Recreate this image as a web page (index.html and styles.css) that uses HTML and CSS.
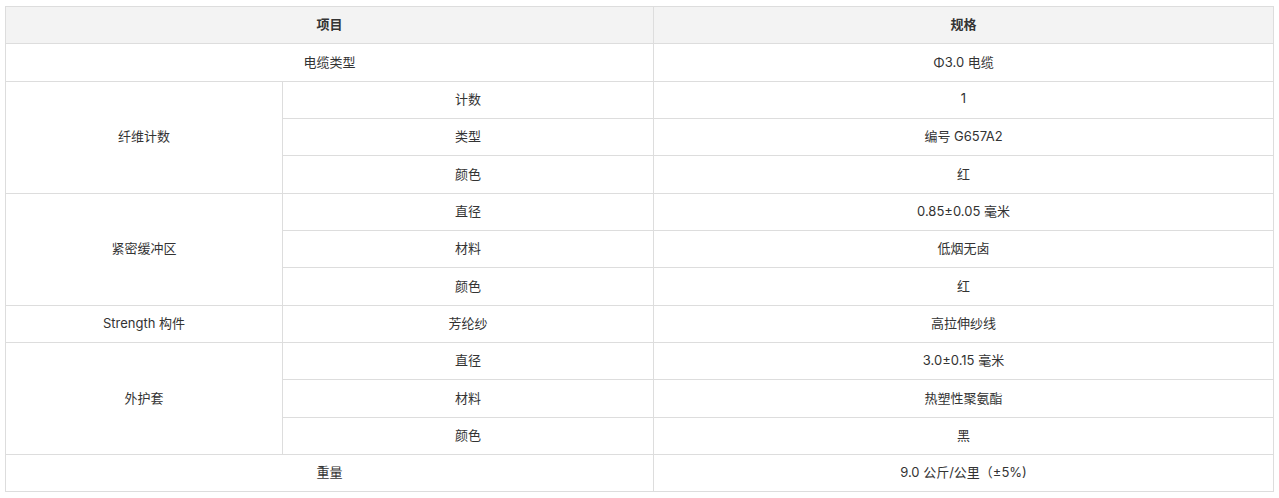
FILE: index.html
```html
<!DOCTYPE html>
<html lang="zh">
<head>
<meta charset="utf-8">
<link rel="stylesheet" href="styles.css">
</head>
<body>
<div class="wrap">
<table class="spec">
<colgroup><col class="c1"><col class="c2"><col class="c3"></colgroup>
<thead>
<tr><th colspan="2">项目</th><th>规格</th></tr>
</thead>
<tbody>
<tr><td colspan="2">电缆类型</td><td>Φ3.0 电缆</td></tr>
<tr><td rowspan="3">纤维计数</td><td>计数</td><td>1</td></tr>
<tr><td>类型</td><td>编号 G657A2</td></tr>
<tr><td>颜色</td><td>红</td></tr>
<tr><td rowspan="3">紧密缓冲区</td><td>直径</td><td>0.85±0.05 毫米</td></tr>
<tr><td>材料</td><td>低烟无卤</td></tr>
<tr><td>颜色</td><td>红</td></tr>
<tr><td>Strength 构件</td><td>芳纶纱</td><td>高拉伸纱线</td></tr>
<tr><td rowspan="3">外护套</td><td>直径</td><td>3.0±0.15 毫米</td></tr>
<tr><td>材料</td><td>热塑性聚氨酯</td></tr>
<tr><td>颜色</td><td>黑</td></tr>
<tr><td colspan="2">重量</td><td>9.0 公斤/公里（±5%)</td></tr>
</tbody>
</table>
</div>
</body>
</html>
```
FILE: styles.css
```css
html, body {
  margin: 0;
  padding: 0;
  background: #ffffff;
}
.wrap {
  padding: 6px 6px 0 5px;
}
.spec {
  width: 1268px;
  table-layout: fixed;
  border-collapse: collapse;
  font-family: "Inter", "Noto Sans CJK SC", sans-serif;
  font-size: 13px;
  color: #333333;
}
.c1 { width: 277px; }
.c2 { width: 371px; }
.c3 { width: 620px; }
.spec th, .spec td {
  border: 1px solid #dddddd;
  text-align: center;
  vertical-align: middle;
  padding: 0 8px 3px;
  height: 37.35px;
  box-sizing: border-box;
}
.spec th {
  background: #f3f3f3;
  font-weight: 600;
}
```
